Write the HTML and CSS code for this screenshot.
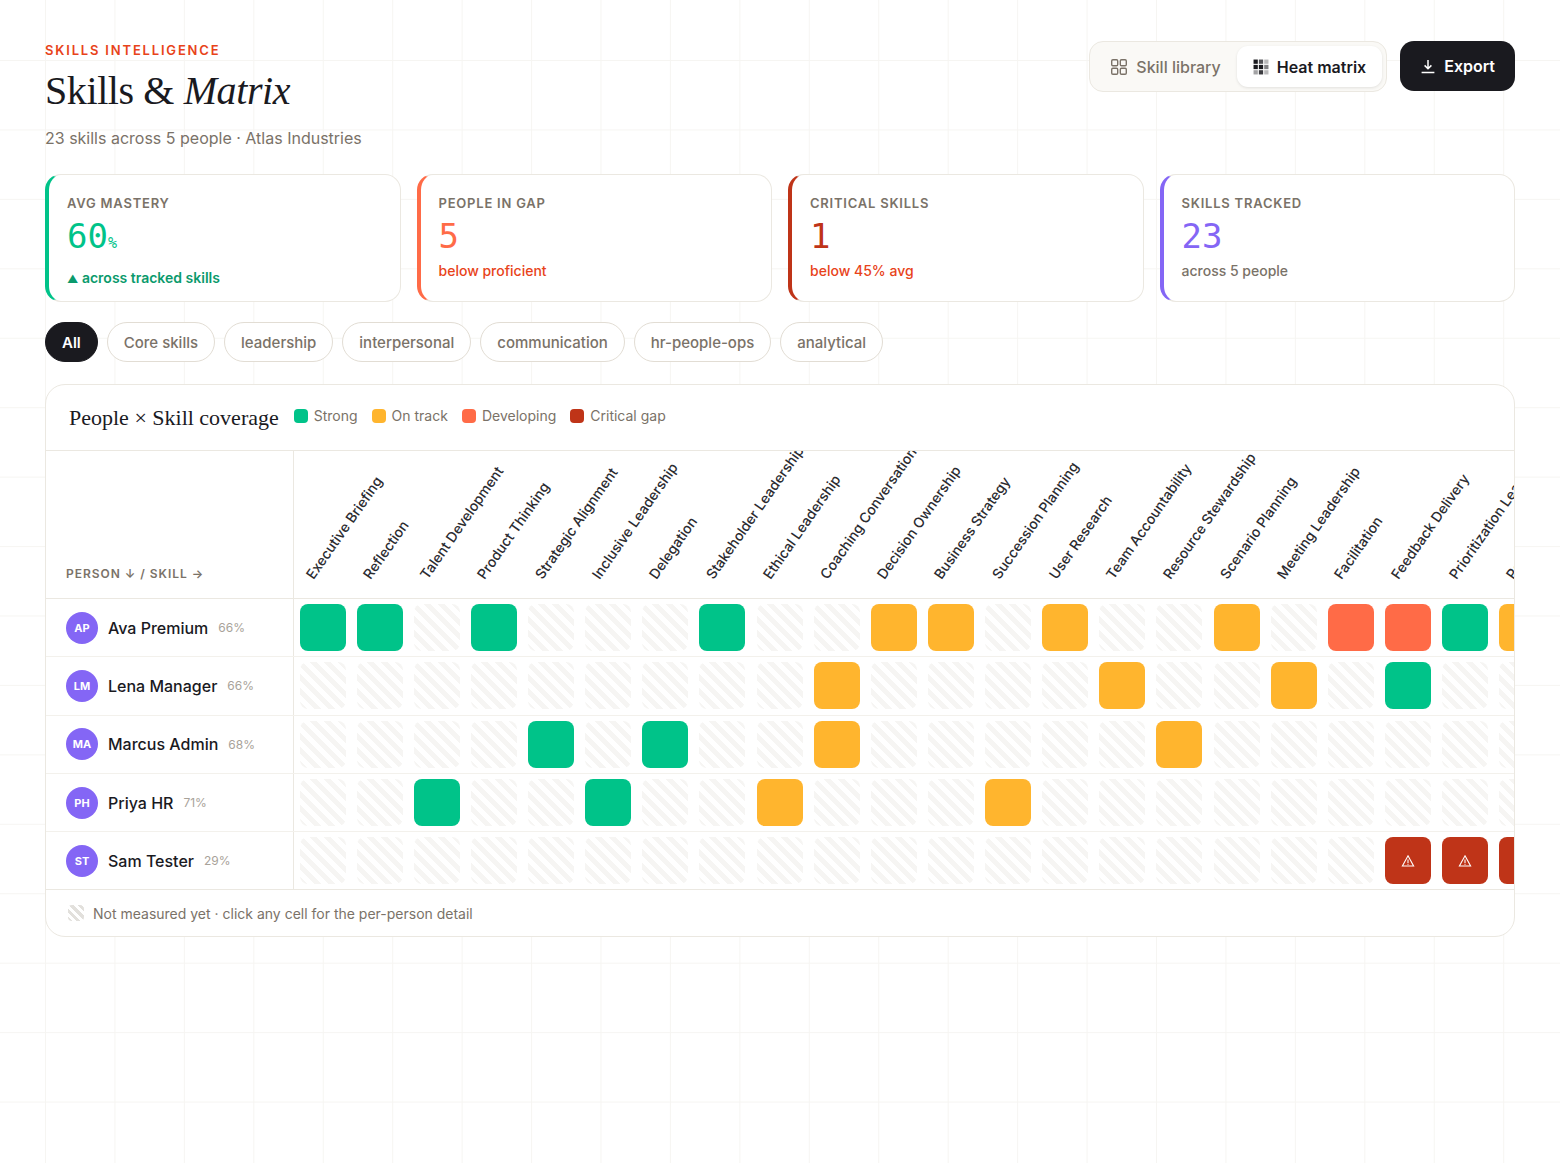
FILE: index.html
```html
<!DOCTYPE html>
<html lang="en">
<head>
    <meta charset="UTF-8">
    <meta name="viewport" content="width=device-width, initial-scale=1.0">
    <title>Skills &amp; Matrix</title>
    <link rel="stylesheet" href="styles.css">
</head>
<body>
    <header class="page-head">
        <div>
            <div class="eyebrow">SKILLS INTELLIGENCE</div>
            <h1>Skills &amp; <em>Matrix</em></h1>
            <p class="subtitle">23 skills across 5 people · Atlas Industries</p>
        </div>
        <div class="tools">
            <div class="tabs">
                <button class="tab">
                    <svg width="18" height="18" viewBox="0 0 18 18" fill="none" stroke="currentColor" stroke-width="1.4"><rect x="1.7" y="1.7" width="6" height="6" rx="1.2"/><rect x="10.3" y="1.7" width="6" height="6" rx="1.2"/><rect x="1.7" y="10.3" width="6" height="6" rx="1.2"/><rect x="10.3" y="10.3" width="6" height="6" rx="1.2"/></svg>
                    Skill library
                </button>
                <button class="tab active">
                    <svg width="16" height="16" viewBox="0 0 15 15" fill="#1a1a1f"><rect x="0.5" y="0.5" width="4" height="4"/><rect x="5.5" y="0.5" width="4" height="4" opacity=".75"/><rect x="10.5" y="0.5" width="4" height="4" opacity=".3"/><rect x="0.5" y="5.5" width="4" height="4"/><rect x="5.5" y="5.5" width="4" height="4"/><rect x="10.5" y="5.5" width="4" height="4" opacity=".55"/><rect x="0.5" y="10.5" width="4" height="4" opacity=".4"/><rect x="5.5" y="10.5" width="4" height="4" opacity=".85"/><rect x="10.5" y="10.5" width="4" height="4" opacity=".3"/></svg>
                    Heat matrix
                </button>
            </div>
            <button class="export">
                <svg width="16" height="16" viewBox="0 0 16 16" fill="none" stroke="currentColor" stroke-width="1.5"><path d="M8 2v8.5M4.6 7.4 8 10.8l3.4-3.4M1.6 14.4h12.8"/></svg>
                Export
            </button>
        </div>
    </header>

    <section class="stats">
        <div class="stat green">
            <div class="stat-label">AVG MASTERY</div>
            <div class="stat-value">60<small>%</small></div>
            <div class="stat-note"><span class="tri">▲</span> across tracked skills</div>
        </div>
        <div class="stat coral">
            <div class="stat-label">PEOPLE IN GAP</div>
            <div class="stat-value">5</div>
            <div class="stat-note">below proficient</div>
        </div>
        <div class="stat red">
            <div class="stat-label">CRITICAL SKILLS</div>
            <div class="stat-value">1</div>
            <div class="stat-note">below 45% avg</div>
        </div>
        <div class="stat purple">
            <div class="stat-label">SKILLS TRACKED</div>
            <div class="stat-value">23</div>
            <div class="stat-note">across 5 people</div>
        </div>
    </section>

    <nav class="filters">
        <button class="pill on">All</button>
        <button class="pill">Core skills</button>
        <button class="pill">leadership</button>
        <button class="pill">interpersonal</button>
        <button class="pill">communication</button>
        <button class="pill">hr-people-ops</button>
        <button class="pill">analytical</button>
    </nav>

    <section class="matrix">
        <div class="matrix-title">
            <h2>People × Skill coverage</h2>
            <div class="legend">
                <span class="key"><i class="dot g"></i>Strong</span>
                <span class="key"><i class="dot o"></i>On track</span>
                <span class="key"><i class="dot c"></i>Developing</span>
                <span class="key"><i class="dot r"></i>Critical gap</span>
            </div>
        </div>

        <div class="row head">
            <div class="person axis">PERSON ↓ / SKILL →</div>
            <div class="col"><span>Executive Briefing</span></div>
            <div class="col"><span>Reflection</span></div>
            <div class="col"><span>Talent Development</span></div>
            <div class="col"><span>Product Thinking</span></div>
            <div class="col"><span>Strategic Alignment</span></div>
            <div class="col"><span>Inclusive Leadership</span></div>
            <div class="col"><span>Delegation</span></div>
            <div class="col"><span>Stakeholder Leadership</span></div>
            <div class="col"><span>Ethical Leadership</span></div>
            <div class="col"><span>Coaching Conversations</span></div>
            <div class="col"><span>Decision Ownership</span></div>
            <div class="col"><span>Business Strategy</span></div>
            <div class="col"><span>Succession Planning</span></div>
            <div class="col"><span>User Research</span></div>
            <div class="col"><span>Team Accountability</span></div>
            <div class="col"><span>Resource Stewardship</span></div>
            <div class="col"><span>Scenario Planning</span></div>
            <div class="col"><span>Meeting Leadership</span></div>
            <div class="col"><span>Facilitation</span></div>
            <div class="col"><span>Feedback Delivery</span></div>
            <div class="col"><span>Prioritization Leadership</span></div>
            <div class="col"><span>Performance Coaching</span></div>
            <div class="col"><span>Workforce Planning</span></div>
        </div>

        <div class="row">
            <div class="person"><span class="avatar">AP</span><span class="name">Ava Premium</span><span class="pct">66%</span></div>
            <i class="cell g"></i><i class="cell g"></i><i class="cell"></i><i class="cell g"></i><i class="cell"></i><i class="cell"></i><i class="cell"></i><i class="cell g"></i><i class="cell"></i><i class="cell"></i><i class="cell o"></i><i class="cell o"></i><i class="cell"></i><i class="cell o"></i><i class="cell"></i><i class="cell"></i><i class="cell o"></i><i class="cell"></i><i class="cell c"></i><i class="cell c"></i><i class="cell g"></i><i class="cell o"></i><i class="cell"></i>
        </div>
        <div class="row">
            <div class="person"><span class="avatar">LM</span><span class="name">Lena Manager</span><span class="pct">66%</span></div>
            <i class="cell"></i><i class="cell"></i><i class="cell"></i><i class="cell"></i><i class="cell"></i><i class="cell"></i><i class="cell"></i><i class="cell"></i><i class="cell"></i><i class="cell o"></i><i class="cell"></i><i class="cell"></i><i class="cell"></i><i class="cell"></i><i class="cell o"></i><i class="cell"></i><i class="cell"></i><i class="cell o"></i><i class="cell"></i><i class="cell g"></i><i class="cell"></i><i class="cell"></i><i class="cell"></i>
        </div>
        <div class="row">
            <div class="person"><span class="avatar">MA</span><span class="name">Marcus Admin</span><span class="pct">68%</span></div>
            <i class="cell"></i><i class="cell"></i><i class="cell"></i><i class="cell"></i><i class="cell g"></i><i class="cell"></i><i class="cell g"></i><i class="cell"></i><i class="cell"></i><i class="cell o"></i><i class="cell"></i><i class="cell"></i><i class="cell"></i><i class="cell"></i><i class="cell"></i><i class="cell o"></i><i class="cell"></i><i class="cell"></i><i class="cell"></i><i class="cell"></i><i class="cell"></i><i class="cell"></i><i class="cell"></i>
        </div>
        <div class="row">
            <div class="person"><span class="avatar">PH</span><span class="name">Priya HR</span><span class="pct">71%</span></div>
            <i class="cell"></i><i class="cell"></i><i class="cell g"></i><i class="cell"></i><i class="cell"></i><i class="cell g"></i><i class="cell"></i><i class="cell"></i><i class="cell o"></i><i class="cell"></i><i class="cell"></i><i class="cell"></i><i class="cell o"></i><i class="cell"></i><i class="cell"></i><i class="cell"></i><i class="cell"></i><i class="cell"></i><i class="cell"></i><i class="cell"></i><i class="cell"></i><i class="cell"></i><i class="cell"></i>
        </div>
        <div class="row last">
            <div class="person"><span class="avatar">ST</span><span class="name">Sam Tester</span><span class="pct">29%</span></div>
            <i class="cell"></i><i class="cell"></i><i class="cell"></i><i class="cell"></i><i class="cell"></i><i class="cell"></i><i class="cell"></i><i class="cell"></i><i class="cell"></i><i class="cell"></i><i class="cell"></i><i class="cell"></i><i class="cell"></i><i class="cell"></i><i class="cell"></i><i class="cell"></i><i class="cell"></i><i class="cell"></i><i class="cell"></i>
            <i class="cell r"><svg width="14" height="14" viewBox="0 0 14 14" fill="none" stroke="#fff" stroke-width="1.1"><path d="M7 1.8 12.6 12H1.4Z"/><path d="M7 5.4v3.6M7 9.8v1"/></svg></i>
            <i class="cell r"><svg width="14" height="14" viewBox="0 0 14 14" fill="none" stroke="#fff" stroke-width="1.1"><path d="M7 1.8 12.6 12H1.4Z"/><path d="M7 5.4v3.6M7 9.8v1"/></svg></i>
            <i class="cell r"><svg width="14" height="14" viewBox="0 0 14 14" fill="none" stroke="#fff" stroke-width="1.1"><path d="M7 1.8 12.6 12H1.4Z"/><path d="M7 5.4v3.6M7 9.8v1"/></svg></i>
            <i class="cell"></i>
        </div>

        <div class="matrix-foot"><i class="swatch"></i>Not measured yet · click any cell for the per-person detail</div>
    </section>
</body>
</html>
```

FILE: styles.css
```css
* {
    box-sizing: border-box;
}
html, body {
    height: 100%;
}
body {
    margin: 0;
    padding: 40px 45px 0;
    font-family: Inter, "Noto Sans", sans-serif;
    color: #1a1a1f;
    background-color: #fff;
    background-image:
        linear-gradient(to right, #f6f5f2 1px, transparent 1px),
        linear-gradient(to bottom, #f6f5f2 1px, transparent 1px);
    background-size: 69.45px 69.45px;
    background-position: 45px 60px;
}
button {
    font-family: inherit;
    cursor: pointer;
}

/* header */
.page-head {
    display: flex;
    justify-content: space-between;
    align-items: flex-start;
}
.eyebrow {
    font-size: 13px;
    line-height: 20px;
    font-weight: 600;
    letter-spacing: 0.14em;
    color: #e8431a;
}
h1 {
    margin: 7px 0 0;
    font-family: "Liberation Serif", serif;
    font-size: 40px;
    line-height: 48px;
    font-weight: 400;
    letter-spacing: -0.01em;
    color: #1a1a1f;
}
h1 em {
    font-style: italic;
}
.subtitle {
    margin: 11px 0 0;
    font-size: 16px;
    line-height: 24px;
    color: #7a7268;
}
.tools {
    display: flex;
    align-items: flex-start;
    gap: 13px;
    margin-top: 1px;
}
.tabs {
    display: flex;
    height: 51px;
    padding: 4px;
    background: #faf9f6;
    border: 1px solid #ebe8e1;
    border-radius: 14px;
}
.tab {
    display: flex;
    align-items: center;
    gap: 8px;
    padding: 0 16px;
    border: 0;
    border-radius: 11px;
    background: transparent;
    font-size: 16px;
    font-weight: 500;
    color: #7a7268;
}
.tab.active {
    background: #fff;
    color: #1a1a1f;
    font-weight: 600;
    box-shadow: 0 1px 3px rgba(0,0,0,0.1);
}
.export {
    display: flex;
    align-items: center;
    gap: 8px;
    height: 50px;
    padding: 0 20px;
    border: 0;
    border-radius: 14px;
    background: #1a1a1f;
    color: #fff;
    font-size: 16px;
    font-weight: 600;
}

/* stat cards */
.stats {
    display: grid;
    grid-template-columns: repeat(4, 1fr);
    gap: 16px;
    margin-top: 24px;
}
.stat {
    height: 128px;
    padding: 19px 18px 0;
    background: #fff;
    border: 1px solid #ebe8e1;
    border-left-width: 4px;
    border-radius: 16px;
}
.stat.green { border-left-color: #00c389; }
.stat.coral { border-left-color: #ff6b47; }
.stat.red { border-left-color: #bf3418; }
.stat.purple { border-left-color: #8466f5; }
.stat-label {
    font-size: 13px;
    line-height: 18px;
    font-weight: 600;
    letter-spacing: 0.06em;
    color: #7a7268;
}
.stat-value {
    margin-top: 4px;
    font-family: "DejaVu Sans Mono", monospace;
    font-size: 34px;
    line-height: 40px;
}
.stat-value small {
    font-size: 15px;
}
.green .stat-value { color: #00c389; }
.coral .stat-value { color: #ff6b47; }
.red .stat-value { color: #bf3418; }
.purple .stat-value { color: #8466f5; }
.stat-note {
    margin-top: 5px;
    font-size: 14px;
    line-height: 20px;
    font-weight: 500;
    color: #e8431a;
}
.green .stat-note { color: #0a9a6c; font-weight: 600; }
.purple .stat-note { color: #7a7268; }
.tri {
    font-size: 11px;
}

/* filters */
.filters {
    display: flex;
    gap: 9px;
    margin-top: 20px;
}
.pill {
    height: 40px;
    padding: 0 16px;
    background: #fff;
    border: 1px solid #e2ddd4;
    border-radius: 20px;
    font-size: 15px;
    font-weight: 500;
    color: #7a7268;
}
.pill.on {
    background: #1a1a1f;
    border-color: #1a1a1f;
    color: #fff;
    font-weight: 600;
}

/* matrix card */
.matrix {
    margin-top: 22px;
    background: #fff;
    border: 1px solid #ebe8e1;
    border-radius: 20px;
    overflow: hidden;
}
.matrix-title {
    display: flex;
    align-items: center;
    gap: 15px;
    height: 66px;
    padding: 0 23px;
    border-bottom: 1px solid #ebe8e1;
}
h2 {
    margin: 0;
    font-family: "Liberation Serif", serif;
    font-size: 22px;
    font-weight: 400;
}
.legend {
    display: flex;
    gap: 14px;
    margin-top: -4px;
}
.key {
    display: flex;
    align-items: center;
    gap: 6px;
    font-size: 14px;
    color: #7a7268;
}
.dot {
    width: 14px;
    height: 14px;
    border-radius: 4px;
}
.g { background: #00c389; }
.o { background: #ffb52e; }
.c { background: #ff6b47; }
.r { background: #bf3418; }

.row {
    display: flex;
    height: 58.3px;
    border-bottom: 1px solid #f3f1ec;
}
.row.last {
    border-bottom-color: #ebe8e1;
}
.row.head {
    height: 148px;
    border-bottom-color: #ebe8e1;
    overflow: hidden;
}
.person {
    flex: 0 0 248px;
    display: flex;
    align-items: center;
    padding-left: 20px;
    border-right: 1px solid #ebe8e1;
}
.axis {
    align-items: flex-end;
    padding-bottom: 16px;
    font-size: 12px;
    line-height: 16px;
    font-weight: 600;
    letter-spacing: 0.08em;
    color: #7a7268;
}
.col {
    flex: 0 0 57.14px;
    width: 57.14px;
    padding: 0 0 16px 22px;
    display: flex;
    align-items: flex-end;
}
.col span {
    display: block;
    width: 0;
    white-space: nowrap;
    font-size: 14px;
    line-height: 16px;
    font-weight: 500;
    color: #2b2b30;
    transform-origin: 0 100%;
    transform: rotate(-55deg);
}
.avatar {
    flex: none;
    width: 32px;
    height: 32px;
    border-radius: 50%;
    background: #8466f5;
    color: #fff;
    font-size: 11px;
    font-weight: 700;
    line-height: 32px;
    text-align: center;
}
.name {
    margin-left: 10px;
    font-size: 16px;
    font-weight: 500;
}
.pct {
    margin-left: 10px;
    font-size: 12px;
    color: #a8a299;
}
.cell {
    flex: 0 0 46px;
    height: 47px;
    margin: 5px 5.57px 0;
    border-radius: 8px;
    background-image: repeating-linear-gradient(45deg, #f6f5f3 0, #f6f5f3 5px, #fff 5px, #fff 10px);
}
.cell.g, .cell.o, .cell.c, .cell.r {
    background-image: none;
}
.cell.r {
    display: flex;
    align-items: center;
    justify-content: center;
}
.matrix-foot {
    display: flex;
    align-items: center;
    gap: 9px;
    height: 46px;
    padding-left: 22px;
    font-size: 14px;
    color: #7a7268;
}
.swatch {
    width: 16px;
    height: 16px;
    border-radius: 4px;
    background-image: repeating-linear-gradient(45deg, #e2e0dc 0, #e2e0dc 3px, #fff 3px, #fff 6px);
}
```
